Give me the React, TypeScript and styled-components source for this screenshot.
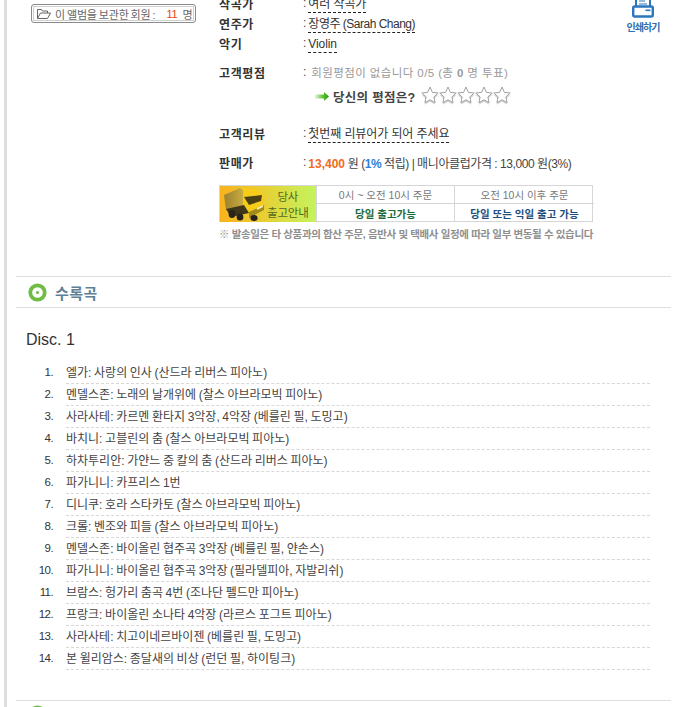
import React from 'react';
import styled, { createGlobalStyle } from 'styled-components';

const GlobalStyle = createGlobalStyle`
  html, body {
    margin: 0;
    padding: 0;
    background: #ffffff;
    height: 707px;
    overflow: hidden;
  }
  body {
    font-family: "Liberation Sans", "Noto Sans CJK KR", sans-serif;
    font-size: 12px;
    color: #333333;
  }
`;

const Page = styled.div`
  width: 667px;
  height: 707px;
  margin-left: 4px;
  border-left: 3px solid #dedede;
  overflow: hidden;
  box-sizing: border-box;
  padding-left: 9px;
`;

const Top = styled.div`
  display: flex;
  height: 276px;
  box-sizing: border-box;
`;

const LeftCol = styled.div`
  width: 203px;
  flex: none;
  padding: 4px 0 0 15px;
  box-sizing: border-box;
`;

const SaveBox = styled.div`
  width: 165px;
  height: 19px;
  box-sizing: border-box;
  border: 1px solid #8a8a8a;
  border-radius: 3px;
  box-shadow: inset 0 0 0 1px #fff, inset 0 0 0 2px #cfcfcf;
  display: flex;
  align-items: center;
  padding-left: 5px;
  font-size: 11px;
  color: #666;
  letter-spacing: -0.2px;
  word-spacing: -0.8px;
  white-space: nowrap;
`;

const SaveCount = styled.span`
  color: #f0400f;
  margin: 0 5px 0 11px;
  font-size: 11px;
`;

const InfoCol = styled.div`
  width: 390px;
  flex: none;
  margin-top: -7px;
`;

const Row = styled.div<{ $top: number }>`
  display: flex;
  align-items: center;
  height: 20px;
  margin-top: ${(p) => p.$top}px;
  white-space: nowrap;
`;

const Label = styled.div`
  width: 84px;
  flex: none;
  font-weight: 700;
  color: #333;
  font-size: 12px;
  letter-spacing: 0.6px;
`;

const Colon = styled.span`
  margin-right: 2px;
  color: #444;
`;

const Linked = styled.span<{ $tight?: boolean }>`
  border-bottom: 1px dashed #222;
  color: #333;
  line-height: 15px;
  padding-top: 4px;
  letter-spacing: ${(p) => (p.$tight ? '-0.5px' : '-0.1px')};
`;

const Muted = styled.span`
  color: #999;
  font-size: 11.5px;
  margin-left: 3px;
  letter-spacing: 0.4px;
`;

const RateRow = styled.div`
  display: flex;
  align-items: center;
  height: 20px;
  margin: 4px 0 0 96px;
  font-weight: 700;
  color: #444;
  font-size: 12.5px;
  letter-spacing: 0.3px;
  white-space: nowrap;
`;

const Stars = styled.div`
  display: flex;
  margin-left: 5px;
`;

const PriceLine = styled.span`
  font-size: 12px;
  color: #444;
  letter-spacing: -0.4px;
  word-spacing: -0.2px;
`;

const Price = styled.b`
  color: #f26a1b;
  letter-spacing: 0;
`;

const Pct = styled.b`
  color: #2f7fd6;
`;

const Delivery = styled.div`
  display: grid;
  grid-template-columns: 97px 138px 139px;
  grid-template-rows: 18px 18px;
  width: 374px;
  height: 37px;
  box-sizing: border-box;
  border: 1px solid #d6d6d6;
  margin-top: 13px;
`;

const Banner = styled.div`
  grid-row: 1 / span 2;
  display: flex;
  align-items: center;
  background: linear-gradient(90deg, #f9b21c 0%, #e8cf34 45%, #c4f45e 100%);
  border-right: 1px solid #d6d6d6;
  overflow: hidden;
`;

const BannerText = styled.div`
  font-size: 11.5px;
  line-height: 16px;
  color: #4f6a22;
  text-align: center;
  margin-left: 2px;
  padding-top: 2px;
  letter-spacing: -0.2px;
  white-space: nowrap;
`;

const Cell = styled.div<{ $color: string; $bold?: boolean; $last?: boolean; $top?: boolean }>`
  display: flex;
  align-items: center;
  justify-content: center;
  font-size: 10.5px;
  white-space: nowrap;
  color: ${(p) => p.$color};
  font-weight: ${(p) => (p.$bold ? 700 : 400)};
  border-right: ${(p) => (p.$last ? 'none' : '1px solid #d6d6d6')};
  border-bottom: ${(p) => (p.$top ? '1px solid #d6d6d6' : 'none')};
`;

const Note = styled.div`
  margin-top: 4px;
  font-size: 10.5px;
  font-weight: 700;
  color: #8f8f8f;
  white-space: nowrap;
  letter-spacing: -0.36px;
`;

const PrintCol = styled.div`
  margin-left: 16px;
  width: 36px;
  display: flex;
  flex-direction: column;
  align-items: center;
  flex: none;
`;

const PrintLabel = styled.div`
  font-size: 10px;
  font-weight: 700;
  color: #2c6fb3;
  white-space: nowrap;
  letter-spacing: -1px;
  line-height: 12px;
  margin-top: 4px;
`;

const SectionHead = styled.div`
  height: 32px;
  box-sizing: border-box;
  border-top: 1px solid #dedede;
  border-bottom: 1px solid #dedede;
  display: flex;
  align-items: center;
  padding-left: 12px;
  gap: 8px;
`;

const SectionTitle = styled.h3`
  margin: 0;
  font-size: 15px;
  font-weight: 700;
  color: #5d8097;
  letter-spacing: 0.5px;
`;

const DiscTitle = styled.div`
  font-size: 16px;
  color: #333;
  margin: 22px 0 0 10px;
  line-height: 19px;
`;

const Tracks = styled.ol`
  list-style: none;
  margin: 13px 0 0;
  padding: 0;
`;

const Track = styled.li`
  display: flex;
  height: 22px;
`;

const TrackNum = styled.span`
  width: 37px;
  flex: none;
  text-align: right;
  font-size: 11.5px;
  line-height: 21px;
  color: #333;
  letter-spacing: -0.6px;
`;

const TrackName = styled.span`
  width: 584px;
  flex: none;
  margin-left: 13px;
  box-sizing: border-box;
  border-bottom: 1px dashed #d8d8d8;
  padding-top: 1px;
  line-height: 21px;
  font-size: 12px;
  color: #444;
  word-spacing: -0.7px;
  white-space: nowrap;
`;

const NextHead = styled.div`
  margin-top: 30px;
  border-top: 1px solid #dedede;
  padding: 4px 0 0 12px;
`;

const FolderIcon = () => (
  <svg width="14" height="11" viewBox="0 0 14 11" fill="none" stroke="#666" strokeWidth="1" style={{ marginRight: 4, flex: 'none' }}>
    <path d="M.5 10.5V1.5h4l1 1.5h5v2" />
    <path d="M.5 10.5l3-5.5h10l-3 5.5z" />
  </svg>
);

const Arrow = () => (
  <svg width="14" height="9" viewBox="0 0 14 9" style={{ marginRight: 4, flex: 'none' }}>
    <defs>
      <linearGradient id="arrowFade" x1="0" x2="1" y1="0" y2="0">
        <stop offset="0" stopColor="#e4f5dc" />
        <stop offset="0.6" stopColor="#58c02c" />
        <stop offset="1" stopColor="#2f8f22" />
      </linearGradient>
    </defs>
    <path d="M0 2.5h9V0l5 4.5L9 9V6.5H0z" fill="url(#arrowFade)" />
  </svg>
);

const Star = () => (
  <svg width="18" height="20" viewBox="0 0 18 20" style={{ flex: 'none' }}>
    <path d="M9 3l2.4 5.4 5.8.6-4.3 3.9 1.2 5.8L9 15.8l-5.1 2.9 1.2-5.8L.8 9l5.8-.6z" fill="#d4d4d4" />
    <path d="M9 1l2.4 5.4 5.8.6-4.3 3.9 1.2 5.8L9 13.8l-5.1 2.9 1.2-5.8L.8 7l5.8-.6z" fill="#fff" stroke="#a0a0a0" strokeWidth="1" />
  </svg>
);

const Truck = () => (
  <svg width="43" height="34" viewBox="3 2 43 34" style={{ flex: 'none', marginLeft: 2 }}>
    <defs>
      <linearGradient id="cargoFade" x1="0" x2="1" y1="0" y2="0">
        <stop offset="0" stopColor="#9a8230" />
        <stop offset="1" stopColor="#cdb040" />
      </linearGradient>
    </defs>
    <path d="M5 10L21 3l5 2v15L7 25z" fill="url(#cargoFade)" />
    <path d="M21 3l16 1 7 6 1 15-15 8-6-13V5z" fill="#f5cc1a" />
    <path d="M25 12l18-2-1 6-12 4z" fill="#4c4016" />
    <path d="M30 27l15-7v5l-15 8z" fill="#a38a1c" />
    <path d="M38 23l6-3v2l-6 3z" fill="#f8ecb0" />
    <path d="M7 24l18-4 5 8-18 4z" fill="#3d3618" />
    <ellipse cx="13" cy="29" rx="3.4" ry="4" fill="#26241a" />
    <ellipse cx="21" cy="32" rx="3.4" ry="3.6" fill="#26241a" />
    <ellipse cx="35" cy="33" rx="3.6" ry="3" fill="#26241a" />
  </svg>
);

const PrinterIcon = () => (
  <svg width="22" height="18" viewBox="0 0 22 18" fill="none" style={{ flex: 'none' }}>
    <path d="M4 -6h14V7H4z" fill="#fff" stroke="#2c76bd" strokeWidth="2" />
    <path d="M7 1h6M7 4h8" stroke="#2c76bd" />
    <rect x="1.2" y="6.5" width="19.6" height="10" rx="1.5" fill="#fff" stroke="#2c76bd" strokeWidth="2.4" />
    <rect x="13.5" y="9.5" width="5" height="1.6" fill="#2c76bd" />
  </svg>
);

const RingIcon = ({ size = 19 }: { size?: number }) => (
  <svg width={size} height={size} viewBox="0 0 20 20" style={{ flex: 'none' }}>
    <circle cx="10" cy="10" r="7.6" fill="#fff" stroke="#6fbd44" strokeWidth="4" />
    <circle cx="10" cy="10" r="1.6" fill="#6fbd44" />
  </svg>
);

const tracks = [
  '엘가: 사랑의 인사 (산드라 리버스 피아노)',
  '멘델스존: 노래의 날개위에 (찰스 아브라모빅 피아노)',
  '사라사테: 카르멘 환타지 3악장, 4악장 (베를린 필, 도밍고)',
  '바치니: 고블린의 춤 (찰스 아브라모빅 피아노)',
  '하차투리안: 가얀느 중 칼의 춤 (산드라 리버스 피아노)',
  '파가니니: 카프리스 1번',
  '디니쿠: 호라 스타카토 (찰스 아브라모빅 피아노)',
  '크롤: 벤조와 피들 (찰스 아브라모빅 피아노)',
  '멘델스존: 바이올린 협주곡 3악장 (베를린 필, 얀손스)',
  '파가니니: 바이올린 협주곡 3악장 (필라델피아, 자발리쉬)',
  '브람스: 헝가리 춤곡 4번 (조나단 펠드만 피아노)',
  '프랑크: 바이올린 소나타 4악장 (라르스 포그트 피아노)',
  '사라사테: 치고이네르바이젠 (베를린 필, 도밍고)',
  '본 윌리암스: 종달새의 비상 (런던 필, 하이팅크)',
];

const App: React.FC = () => {
  return (
    <>
      <GlobalStyle />
      <Page>
        <Top>
          <LeftCol>
            <SaveBox>
              <FolderIcon />
              이 앨범을 보관한 회원 :<SaveCount>11</SaveCount>명
            </SaveBox>
          </LeftCol>
          <InfoCol>
            <Row $top={0}>
              <Label>작곡가</Label>
              <Colon>:</Colon>
              <Linked>여러 작곡가</Linked>
            </Row>
            <Row $top={0}>
              <Label>연주가</Label>
              <Colon>:</Colon>
              <Linked $tight>장영주 (Sarah Chang)</Linked>
            </Row>
            <Row $top={0}>
              <Label>악기</Label>
              <Colon>:</Colon>
              <Linked>Violin</Linked>
            </Row>
            <Row $top={9}>
              <Label>고객평점</Label>
              <Colon>:</Colon>
              <Muted>회원평점이 없습니다 0/5 (총 <b>0</b> 명 투표)</Muted>
            </Row>
            <RateRow>
              <Arrow />
              당신의 평점은?
              <Stars>
                <Star />
                <Star />
                <Star />
                <Star />
                <Star />
              </Stars>
            </RateRow>
            <Row $top={17}>
              <Label>고객리뷰</Label>
              <Colon>:</Colon>
              <Linked>첫번째 리뷰어가 되어 주세요</Linked>
            </Row>
            <Row $top={9}>
              <Label>판매가</Label>
              <Colon>:</Colon>
              <PriceLine>
                <Price>13,400</Price> 원 (<Pct>1%</Pct> 적립) | 매니아클럽가격 : 13,000 원(3%)
              </PriceLine>
            </Row>
            <Delivery>
              <Banner>
                <Truck />
                <BannerText>
                  당사
                  <br />
                  출고안내
                </BannerText>
              </Banner>
              <Cell $color="#777" $top>0시 ~ 오전 10시 주문</Cell>
              <Cell $color="#777" $top $last>오전 10시 이후 주문</Cell>
              <Cell $color="#1c6a3c" $bold>당일 출고가능</Cell>
              <Cell $color="#1c4f80" $bold $last>당일 또는 익일 출고 가능</Cell>
            </Delivery>
            <Note>※ 발송일은 타 상품과의 합산 주문, 음반사 및 택배사 일정에 따라 일부 변동될 수 있습니다</Note>
          </InfoCol>
          <PrintCol>
            <PrinterIcon />
            <PrintLabel>인쇄하기</PrintLabel>
          </PrintCol>
        </Top>
        <SectionHead>
          <RingIcon />
          <SectionTitle>수록곡</SectionTitle>
        </SectionHead>
        <DiscTitle>Disc. 1</DiscTitle>
        <Tracks>
          {tracks.map((name, i) => (
            <Track key={name}>
              <TrackNum>{i + 1}.</TrackNum>
              <TrackName>{name}</TrackName>
            </Track>
          ))}
        </Tracks>
        <NextHead>
          <RingIcon />
        </NextHead>
      </Page>
    </>
  );
};

export default App;
